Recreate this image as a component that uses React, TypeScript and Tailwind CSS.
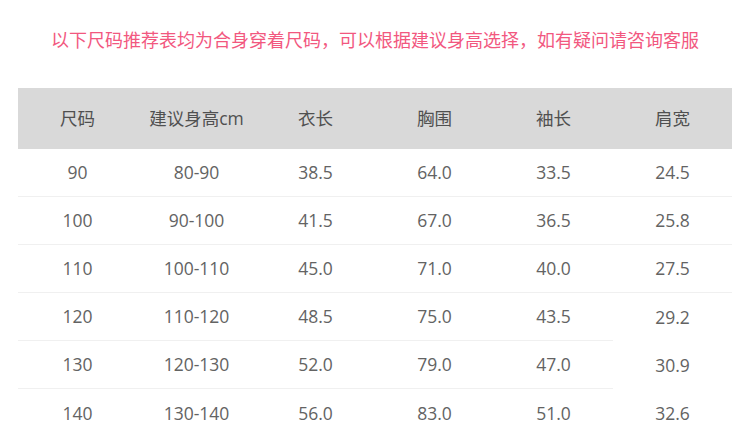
const headers = ["尺码", "建议身高cm", "衣长", "胸围", "袖长", "肩宽"];

const rows = [
  ["90", "80-90", "38.5", "64.0", "33.5", "24.5"],
  ["100", "90-100", "41.5", "67.0", "36.5", "25.8"],
  ["110", "100-110", "45.0", "71.0", "40.0", "27.5"],
  ["120", "110-120", "48.5", "75.0", "43.5", "29.2"],
  ["130", "120-130", "52.0", "79.0", "47.0", "30.9"],
  ["140", "130-140", "56.0", "83.0", "51.0", "32.6"],
];

export default function App() {
  return (
    <div
      className="w-[750px] h-[436px] overflow-hidden bg-white"
      style={{ fontFamily: '"Open Sans", "Noto Sans CJK SC", sans-serif' }}
    >
      <div className="h-[88px] pt-[26px] text-center">
        <p className="text-[18px] leading-[28px] text-[#f2587f]">
          以下尺码推荐表均为合身穿着尺码，可以根据建议身高选择，如有疑问请咨询客服
        </p>
      </div>

      <div className="mx-[18px]">
        <div className="grid grid-cols-6 h-[61px] bg-[#d9d9d9] items-center text-[17.5px] text-[#505050]">
          {headers.map((h) => (
            <div key={h} className="text-center">
              {h}
            </div>
          ))}
        </div>

        {rows.map((row, i) => (
          <div key={row[0]} className="grid grid-cols-6 text-[17.5px] text-[#636363]">
            {row.map((cell, j) => {
              const noLine = i === rows.length - 1 || ((i === 3 || i === 4) && j === 5);
              return (
                <div
                  key={j}
                  className={
                    noLine
                      ? "h-[48px] flex items-center justify-center"
                      : "h-[48px] flex items-center justify-center border-b border-[#f0f0f0]"
                  }
                >
                  {cell}
                </div>
              );
            })}
          </div>
        ))}
      </div>
    </div>
  );
}
